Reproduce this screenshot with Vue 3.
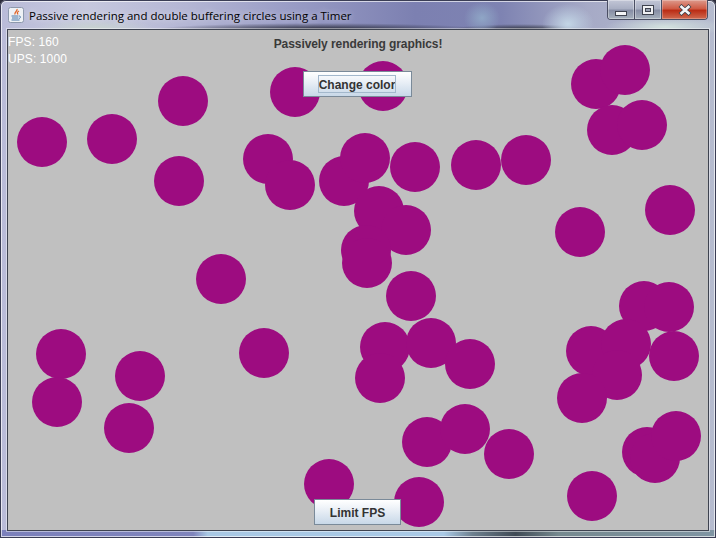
<template>
  <div class="window">
    <div class="titlebar">
      <svg class="app-icon" width="16" height="16" viewBox="0 0 16 16">
        <rect x="0.5" y="0.5" width="15" height="15" rx="2" fill="#eef1f5" stroke="#8d99ad" />
        <path d="M9 2c1 2-3 3-2 5.500M11 4c-2 1-2 2-1 3.500" fill="none" stroke="#e0662a" stroke-width="1.300" />
        <path d="M3.500 9h7M4 11h6.500M3.500 13h8M11 9c2 0 2 2 0 2.500" fill="none" stroke="#4a78a8" stroke-width="1" />
      </svg>
      <span class="title">Passive rendering and double buffering circles using a Timer</span>
      <div class="controls">
        <div class="ctrl ctrl-min"><span class="min-glyph"></span></div>
        <div class="ctrl ctrl-max"><span class="max-glyph"></span></div>
        <div class="ctrl ctrl-close">
          <svg width="16" height="12" viewBox="0 0 16 12">
            <path d="M3 1.500L13 10.500M13 1.500L3 10.500" stroke="#3b4048" stroke-width="4.200" />
            <path d="M3.500 2L12.500 10M12.500 2L3.500 10" stroke="#f4f5f7" stroke-width="2.600" />
          </svg>
        </div>
      </div>
    </div>

    <div class="canvas">
      <svg class="circles" width="700" height="500" viewBox="8 30 700 500">
        <circle v-for="(c, i) in circles" :key="i" :cx="c[0]" :cy="c[1]" r="25" fill="#9d0c80" />
      </svg>
      <div class="stats">
        <div>FPS: 160</div>
        <div>UPS: 1000</div>
      </div>
      <div class="top-area">
        <div class="heading">Passively rendering graphics!</div>
        <button class="btn btn-color"><span class="focus">Change color</span></button>
      </div>
      <button class="btn btn-limit">Limit FPS</button>
    </div>
  </div>
</template>

<script setup>
// centres in window coordinates
const circles = [
  [42, 142], [112, 139], [183, 101], [179, 181], [295, 92], [383, 86],
  [268, 159], [290, 185], [344, 181], [365, 158], [415, 167], [476, 165],
  [526, 160], [379, 211], [406, 230], [366, 250], [367, 263], [221, 279],
  [411, 296], [264, 353], [61, 354], [57, 402], [140, 376], [129, 428],
  [385, 347], [431, 343], [380, 378], [470, 364], [427, 442], [465, 429],
  [509, 454], [329, 484], [419, 502], [592, 496], [596, 84], [625, 70],
  [612, 130], [642, 125], [580, 232], [670, 210], [644, 306], [669, 307],
  [674, 356], [591, 351], [626, 344], [617, 375], [582, 398], [647, 452],
  [655, 458], [676, 436]
];
</script>

<style>
html, body {
  margin: 0;
  background: #2c2c3a;
}
</style>

<style scoped>
.window {
  position: relative;
  box-sizing: border-box;
  width: 716px;
  height: 538px;
  padding: 0 8px 8px;
  border-radius: 6px 6px 0 0;
  overflow: hidden;
  background:
    linear-gradient(90deg, #7b80bb 0%, #7f84bc 27%, #a8c8e4 29%, #a9c9e6 62%, #6d808f 66%, #3f4a55 72%, #75898f 78%, #7f95a3 100%) bottom / 100% 8px no-repeat,
    radial-gradient(ellipse 26px 20px at 568px 24px, #c3d6e6 0%, rgba(150, 175, 205, 0) 100%),
    radial-gradient(ellipse 18px 16px at 482px 18px, #8fa6c6 0%, rgba(143, 166, 198, 0) 100%),
    radial-gradient(ellipse 170px 7px at 320px 30px, #1c1e2a 0%, rgba(28, 30, 42, 0) 100%),
    radial-gradient(ellipse 70px 6px at 520px 30px, #22252f 0%, rgba(34, 37, 47, 0) 100%),
    radial-gradient(ellipse 60px 10px at 665px 27px, #d3e2de 0%, rgba(196, 217, 220, 0) 100%),
    radial-gradient(ellipse 60px 9px at 95px 28px, #c7d2d0 0%, rgba(194, 202, 219, 0) 100%),
    linear-gradient(90deg, #b9bbd8 0%, #c6c8de 12%, #b4b6d4 26%, #9a9dc6 40%, #7c80b1 58%, #7e83b2 70%, #a6aac6 82%, #b6bccf 100%);
  box-shadow: inset 0 0 0 1px #3a3d55, inset 0 0 0 2px rgba(255, 255, 255, 0.65);
}

.titlebar {
  display: flex;
  align-items: center;
  height: 30px;
  margin-left: -1px;
  padding-top: 0;
}

.app-icon {
  flex: none;
  margin: 0 5px 0 1px;
}

.title {
  font-family: "Open Sans", sans-serif;
  font-size: 11.500px;
  color: #000;
  white-space: nowrap;
  text-shadow: 0 0 6px rgba(255, 255, 255, 0.7);
}

.controls {
  position: absolute;
  top: 0;
  left: 607px;
  display: flex;
  height: 20px;
  border: 1px solid #4a4e63;
  border-top: 0;
  border-radius: 0 0 4px 4px;
  overflow: hidden;
  box-sizing: border-box;
}

.ctrl {
  display: flex;
  align-items: center;
  justify-content: center;
  box-sizing: border-box;
  height: 100%;
}

.ctrl-min,
.ctrl-max {
  width: 27px;
  border-right: 1px solid #4a4e63;
  background: linear-gradient(180deg, #c2c6d6 0%, #a9afc3 45%, #878ea5 55%, #a7b1bd 100%);
  box-shadow: inset 0 0 0 1px rgba(255, 255, 255, 0.35);
}

.ctrl-close {
  width: 45px;
  background: linear-gradient(180deg, #dd9a8c 0%, #cf5b45 45%, #bb2d16 55%, #d06a50 100%);
  box-shadow: inset 0 0 0 1px rgba(255, 255, 255, 0.25);
}

.min-glyph {
  display: block;
  width: 10px;
  height: 3px;
  margin-top: 7px;
  background: #f4f5f7;
  box-shadow: 0 0 0 1px #3f434f;
}

.max-glyph {
  display: block;
  box-sizing: border-box;
  width: 10px;
  height: 8px;
  border: 2px solid #f0f1f4;
  background: #9aa1b2;
  box-shadow: 0 0 0 1px #3f434f, inset 0 0 0 1px #3f434f;
}

.canvas {
  position: relative;
  width: 700px;
  height: 500px;
  overflow: hidden;
  background: #c0c0c0;
  outline: 1px solid #3e4350;
  box-shadow: 0 0 0 2px rgba(255, 255, 255, 0.45);
}

.circles {
  position: absolute;
  top: 0;
  left: 0;
  display: block;
}

.stats {
  position: absolute;
  top: 4px;
  left: 0;
  font-family: "Liberation Sans", sans-serif;
  font-size: 12px;
  line-height: 17px;
  letter-spacing: 0.1px;
  color: #fff;
}

.top-area {
  position: absolute;
  top: 0;
  left: 0;
  width: 100%;
  display: flex;
  flex-direction: column;
  align-items: center;
}

.heading {
  margin-top: 7px;
  font-family: "Liberation Sans", sans-serif;
  font-size: 12px;
  line-height: 14px;
  font-weight: bold;
  letter-spacing: -0.07px;
  color: #3a3a3a;
}

.btn {
  box-sizing: border-box;
  padding: 0;
  display: flex;
  align-items: center;
  justify-content: center;
  border: 1px solid #7a8a99;
  border-radius: 0;
  background: linear-gradient(180deg, #fff 0%, #f0f4f9 30%, #c8d8e8 100%);
  font-family: "Liberation Sans", sans-serif;
  font-size: 12px;
  font-weight: bold;
  color: #333;
}

.btn-color {
  position: relative;
  left: -1px;
  width: 109px;
  height: 26px;
  margin-top: 20px;
}

.focus {
  padding-top: 2px;
  line-height: 14px;
  outline: 1px solid #a3b8cc;
}

.btn-limit {
  position: absolute;
  top: 469px;
  left: 306px;
  width: 87px;
  height: 26px;
  padding-top: 2px;
}
</style>
